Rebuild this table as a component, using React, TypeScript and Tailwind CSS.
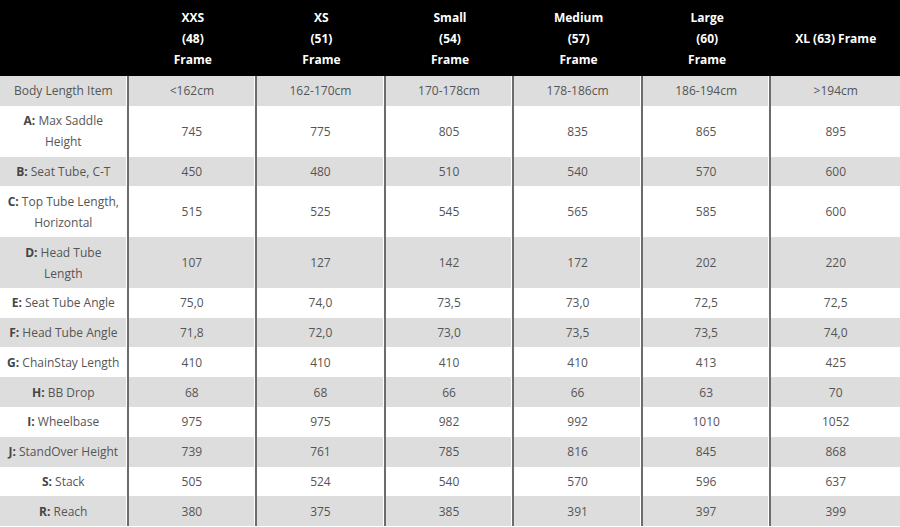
import React from "react";

type Row = { key: string; label: string; label2?: string; values: string[]; plain?: boolean };

const rows: Row[] = [
  { key: "", label: "Body Length Item", values: ["<162cm", "162-170cm", "170-178cm", "178-186cm", "186-194cm", ">194cm"], plain: true },
  { key: "A:", label: "Max Saddle", label2: "Height", values: ["745", "775", "805", "835", "865", "895"] },
  { key: "B:", label: "Seat Tube, C-T", values: ["450", "480", "510", "540", "570", "600"] },
  { key: "C:", label: "Top Tube Length,", label2: "Horizontal", values: ["515", "525", "545", "565", "585", "600"] },
  { key: "D:", label: "Head Tube", label2: "Length", values: ["107", "127", "142", "172", "202", "220"] },
  { key: "E:", label: "Seat Tube Angle", values: ["75,0", "74,0", "73,5", "73,0", "72,5", "72,5"] },
  { key: "F:", label: "Head Tube Angle", values: ["71,8", "72,0", "73,0", "73,5", "73,5", "74,0"] },
  { key: "G:", label: "ChainStay Length", values: ["410", "410", "410", "410", "413", "425"] },
  { key: "H:", label: "BB Drop", values: ["68", "68", "66", "66", "63", "70"] },
  { key: "I:", label: "Wheelbase", values: ["975", "975", "982", "992", "1010", "1052"] },
  { key: "J:", label: "StandOver Height", values: ["739", "761", "785", "816", "845", "868"] },
  { key: "S:", label: "Stack", values: ["505", "524", "540", "570", "596", "637"] },
  { key: "R:", label: "Reach", values: ["380", "375", "385", "391", "397", "399"] },
];

const headers: string[][] = [
  ["XXS", "(48)", "Frame"],
  ["XS", "(51)", "Frame"],
  ["Small", "(54)", "Frame"],
  ["Medium", "(57)", "Frame"],
  ["Large", "(60)", "Frame"],
  ["XL (63) Frame"],
];

export default function App() {
  return (
    <div
      className="w-[900px] h-[527px] overflow-hidden bg-white text-[12px] text-[#555555]"
      style={{ fontFamily: '"Open Sans", "Liberation Sans", sans-serif' }}
    >
      <div className="grid grid-cols-7 bg-black text-white font-bold text-[12px] leading-[21px] h-[76px]">
        <div />
        {headers.map((h, i) => (
          <div key={i} className="flex flex-col items-center justify-center text-center">
            {h.map((t, j) => (
              <span key={j}>{t}</span>
            ))}
          </div>
        ))}
      </div>
      {rows.map((r, ri) => {
        const bg = ri % 2 === 0 ? "bg-[#dddddd]" : "bg-white";
        return (
          <div key={ri} className={`grid grid-cols-7 leading-[21px] ${bg}`}>
            <div className="flex items-center justify-center text-center py-[4.4px] border-r-2 border-[#6c6c6c] shadow-[inset_-1px_0_0_#ffffff] whitespace-nowrap">
              <div>
                {r.key && <span className="font-bold text-[#444444]">{r.key} </span>}
                {r.label}
                {r.label2 && (
                  <>
                    <br />
                    {r.label2}
                  </>
                )}
              </div>
            </div>
            {r.values.map((v, vi) => (
              <div
                key={vi}
                className={`flex items-center justify-center text-center py-[4.4px] ${vi < 5 ? "border-r-2 border-[#6c6c6c] shadow-[inset_-1px_0_0_#ffffff]" : ""}`}
              >
                {v}
              </div>
            ))}
          </div>
        );
      })}
    </div>
  );
}
